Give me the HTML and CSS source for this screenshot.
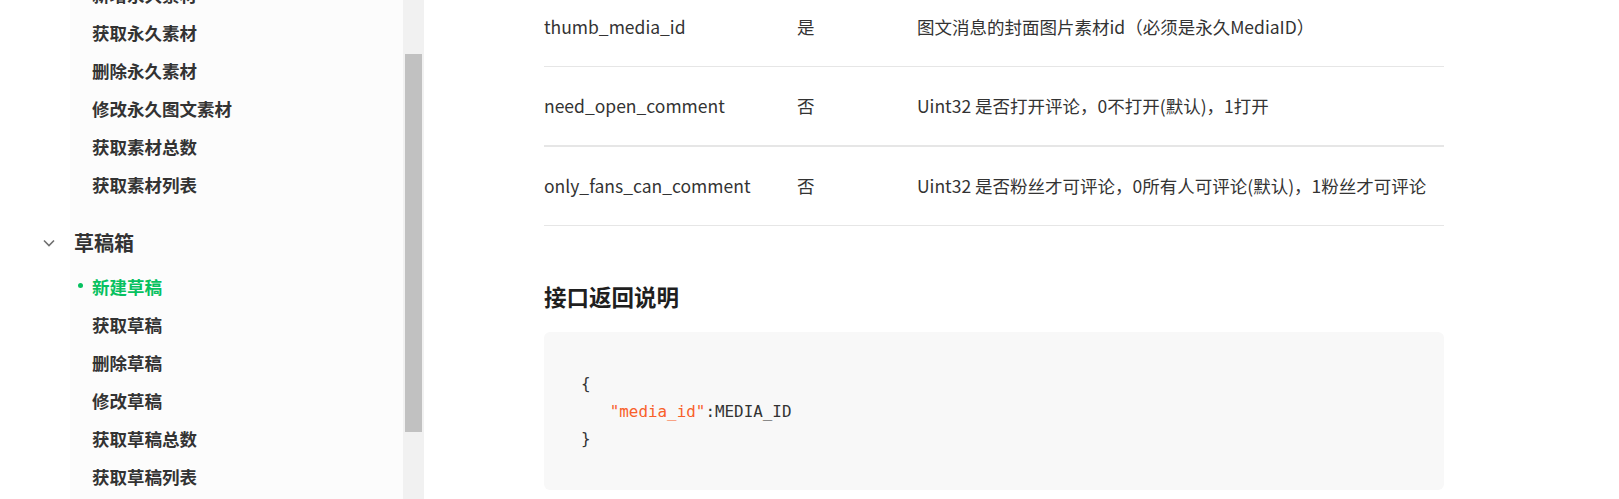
FILE: index.html
```html
<!DOCTYPE html>
<html lang="zh-CN">
<head>
<meta charset="utf-8">
<title>新建草稿</title>
<link rel="stylesheet" href="styles.css">
</head>
<body>
<div class="page">
  <aside class="sidebar">
    <nav class="nav">
      <ul class="nav-list">
        <li class="nav-item">新增永久素材</li>
        <li class="nav-item">获取永久素材</li>
        <li class="nav-item">删除永久素材</li>
        <li class="nav-item">修改永久图文素材</li>
        <li class="nav-item">获取素材总数</li>
        <li class="nav-item">获取素材列表</li>
      </ul>
      <div class="nav-group">
        <svg class="chevron" width="12" height="8" viewBox="0 0 12 8"><path d="M1 1.5 L6 6.5 L11 1.5" fill="none" stroke="#707070" stroke-width="1.6"/></svg>
        <span>草稿箱</span>
      </div>
      <ul class="nav-list sub">
        <li class="nav-item active"><span class="dot"></span>新建草稿</li>
        <li class="nav-item">获取草稿</li>
        <li class="nav-item">删除草稿</li>
        <li class="nav-item">修改草稿</li>
        <li class="nav-item">获取草稿总数</li>
        <li class="nav-item">获取草稿列表</li>
      </ul>
    </nav>
    <div class="scrollbar"><div class="thumb"></div></div>
  </aside>
  <main class="main">
    <div class="content">
      <div class="table">
        <div class="row">
          <div class="cell c1">thumb_media_id</div>
          <div class="cell c2">是</div>
          <div class="cell c3">图文消息的封面图片素材id（必须是永久MediaID）</div>
        </div>
        <div class="row thick">
          <div class="cell c1">need_open_comment</div>
          <div class="cell c2">否</div>
          <div class="cell c3">Uint32 是否打开评论，0不打开(默认)，1打开</div>
        </div>
        <div class="row">
          <div class="cell c1">only_fans_can_comment</div>
          <div class="cell c2">否</div>
          <div class="cell c3">Uint32 是否粉丝才可评论，0所有人可评论(默认)，1粉丝才可评论</div>
        </div>
      </div>
      <h3 class="heading">接口返回说明</h3>
      <pre class="code">{
   <span class="str">"media_id"</span>:MEDIA_ID
}</pre>
    </div>
  </main>
</div>
</body>
</html>
```
FILE: styles.css
```css
* { box-sizing: border-box; }
html, body {
  margin: 0;
  padding: 0;
  background: #fff;
}
body {
  width: 1619px;
  height: 499px;
  overflow: hidden;
  font-family: "Noto Sans CJK SC", "Noto Sans", sans-serif;
  color: #333;
}
.page {
  display: flex;
  height: 499px;
}
.sidebar {
  width: 424px;
  flex: none;
  display: flex;
  height: 499px;
}
.nav {
  width: 403px;
  height: 499px;
  overflow: hidden;
  background: linear-gradient(to right, #fff 70px, #fcfcfc 70px);
}
.nav-list {
  list-style: none;
  margin: -24.5px 0 0 0;
  padding: 0;
}
.nav-list.sub {
  margin-top: 6px;
}
.nav-item {
  height: 38px;
  line-height: 38px;
  padding-left: 92px;
  font-size: 17.5px;
  font-weight: 700;
  color: #333;
  display: flex;
  align-items: center;
}
.nav-item.active {
  color: #07c160;
  padding-left: 78px;
}
.dot {
  width: 5px;
  height: 5px;
  border-radius: 50%;
  background: #07c160;
  margin-right: 9px;
  margin-top: -2px;
}
.nav-group {
  margin-top: 20px;
  height: 38px;
  display: flex;
  align-items: center;
  padding-left: 43px;
  font-size: 20px;
  font-weight: 700;
  color: #333;
}
.chevron {
  margin-right: 19px;
  margin-top: 1px;
}
.scrollbar {
  width: 21px;
  height: 499px;
  background: #f1f1f1;
  padding: 54px 2px 0 2px;
}
.thumb {
  height: 378px;
  background: #c1c1c1;
}
.main {
  flex: 1;
  padding-left: 120px;
}
.content {
  width: 900px;
}
.table {
  margin-top: -12px;
  font-size: 17.5px;
  color: #333;
}
.row {
  display: grid;
  grid-template-columns: 253px 120px 1fr;
  height: 79px;
  align-items: center;
  border-bottom: 1px solid #e6e6e6;
}
.row.thick {
  height: 80px;
  border-bottom: 2px solid #e6e6e6;
}
.cell {
  white-space: nowrap;
  margin-top: -1px;
}
.heading {
  margin: 55px 0 0 0;
  font-size: 22.5px;
  line-height: 30px;
  font-weight: 700;
  color: #1f1f1f;
}
.code {
  margin: 21px 0 0 0;
  height: 158px;
  border-radius: 6px;
  background: #f8f8f8;
  padding: 38px 36px 0 37px;
  font-family: "DejaVu Sans Mono", monospace;
  font-size: 15.9px;
  line-height: 27.5px;
  color: #333;
  white-space: pre;
}
.str {
  color: #f8602a;
}
```
